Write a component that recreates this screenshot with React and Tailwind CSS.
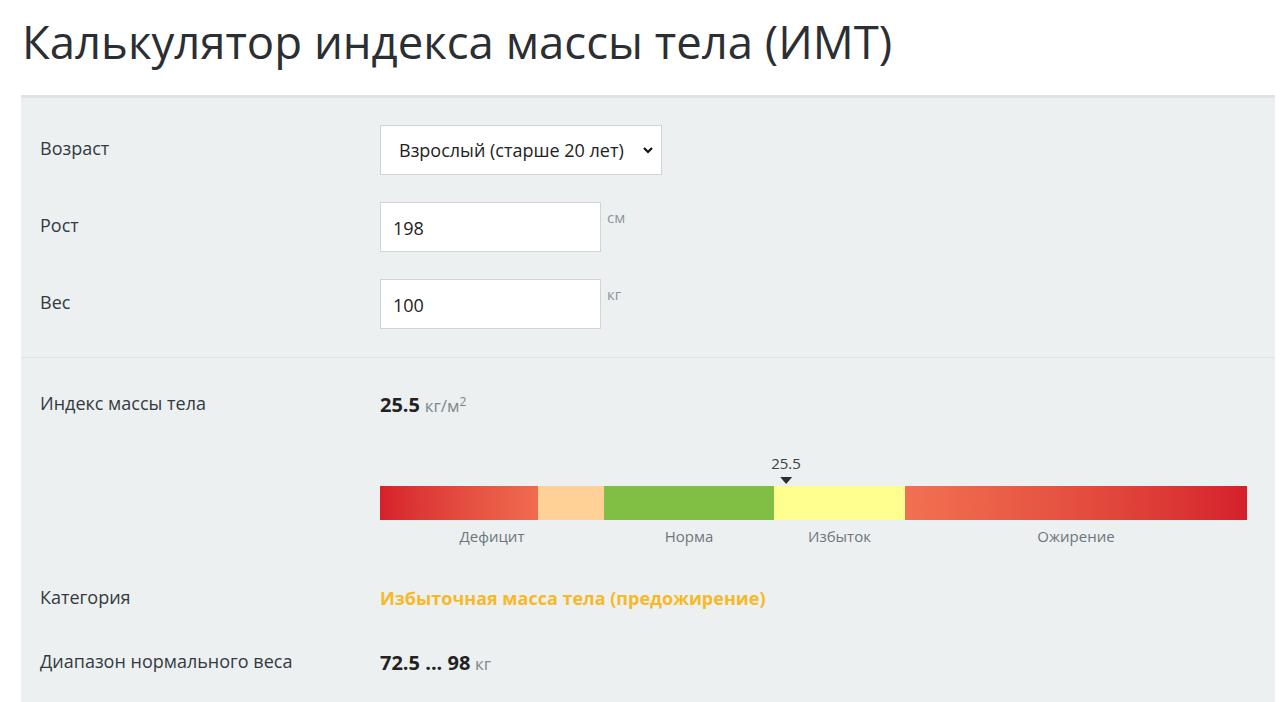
import { useState } from "react";

const Row = ({ label, children, className = "" }) => {
  return (
    <div className={"flex items-center " + className}>
      <div className="w-[340px] shrink-0 pb-[3px] text-[18px] text-[#333a3f]">{label}</div>
      <div className="flex items-start">{children}</div>
    </div>
  );
};

export default function App() {
  const [age, setAge] = useState("adult");
  const [height, setHeight] = useState("198");
  const [weight, setWeight] = useState("100");

  return (
    <div
      className="min-h-[702px] bg-white pl-[21px] pr-[5px] overflow-hidden"
      style={{ fontFamily: '"Open Sans", "Noto Sans", sans-serif' }}
    >
      <h1 className="pt-[8px] pb-[21px] pl-[1px] text-[45.5px] leading-[66px] font-normal text-[#2b2f33]">
        Калькулятор индекса массы тела (ИМТ)
      </h1>

      <div className="bg-[#ecf0f1] border-t-[3px] border-[#dde3e6]">
        {/* inputs */}
        <div className="pl-[19px] pt-[27px] pb-[28px] flex flex-col gap-[27px]">
          <Row label="Возраст">
            <div className="relative">
              <select
                value={age}
                onChange={(e) => setAge(e.target.value)}
                className="appearance-none w-[282px] h-[50px] bg-white border border-[#cfd4d7] pl-[18px] pr-8 text-[18px] text-[#222] outline-none"
              >
                <option value="adult">Взрослый (старше 20 лет)</option>
                <option value="teen">Подросток (до 20 лет)</option>
              </select>
              <svg
                className="absolute right-[7px] top-[18px] pointer-events-none"
                width="14"
                height="14"
                viewBox="0 0 14 14"
              >
                <path d="M3 5l4 4 4-4" fill="none" stroke="#111" strokeWidth="2.2" />
              </svg>
            </div>
          </Row>
          <Row label="Рост">
            <input
              value={height}
              onChange={(e) => setHeight(e.target.value)}
              className="w-[221px] h-[50px] bg-white border border-[#cfd4d7] px-[12px] pt-[2px] text-[18px] text-[#222] outline-none"
            />
            <span className="ml-[6px] mt-[4px] text-[15px] text-[#8b959b]">см</span>
          </Row>
          <Row label="Вес">
            <input
              value={weight}
              onChange={(e) => setWeight(e.target.value)}
              className="w-[221px] h-[50px] bg-white border border-[#cfd4d7] px-[12px] pt-[2px] text-[18px] text-[#222] outline-none"
            />
            <span className="ml-[6px] mt-[4px] text-[15px] text-[#8b959b]">кг</span>
          </Row>
        </div>

        <div className="border-t border-[#dfe4e6] h-px bg-[#f8fafa]" />

        {/* results */}
        <div className="pl-[19px] pt-[32px] pb-[30px]">
          <Row label="Индекс массы тела">
            <div className="text-[18px] text-[#222]">
              <span className="font-bold text-[20px]">25.5</span>{" "}
              <span className="text-[#7d878d] text-[17px]">
                кг/м<sup className="text-[12px]">2</sup>
              </span>
            </div>
          </Row>

          <div className="pl-[340px] pt-[33px]">
            <div className="relative w-[867px] pt-[33px]">
              <div className="absolute left-[406px] top-0 -translate-x-1/2 flex flex-col items-center">
                <span className="text-[15px] leading-[20px] text-[#3a3f44]">25.5</span>
                <svg width="12" height="8" viewBox="0 0 12 8" className="mt-[4px]">
                  <path d="M0 0h12L6 7z" fill="#2b2f33" />
                </svg>
              </div>
              <div className="flex h-[34px]">
                <div className="w-[158px] bg-gradient-to-r from-[#d6202c] to-[#f06b50]" />
                <div className="w-[66px] bg-[#ffd196]" />
                <div className="w-[170px] bg-[#80bf44]" />
                <div className="w-[131px] bg-[#ffff8f]" />
                <div className="w-[342px] bg-gradient-to-r from-[#f27152] to-[#d51f2c]" />
              </div>
              <div className="flex mt-[5px] text-[15px] text-[#6d767c]">
                <div className="w-[224px] text-center">Дефицит</div>
                <div className="w-[170px] text-center">Норма</div>
                <div className="w-[131px] text-center">Избыток</div>
                <div className="w-[342px] text-center">Ожирение</div>
              </div>
            </div>
          </div>

          <Row label="Категория" className="mt-[36px]">
            <span className="font-bold text-[18px] text-[#f7b928]">
              Избыточная масса тела (предожирение)
            </span>
          </Row>

          <Row label="Диапазон нормального веса" className="mt-[34px]">
            <div className="text-[18px] text-[#222]">
              <span className="font-bold text-[20px]">72.5 ... 98</span>{" "}
              <span className="text-[#7d878d] text-[17px]">кг</span>
            </div>
          </Row>
        </div>
      </div>
    </div>
  );
}
